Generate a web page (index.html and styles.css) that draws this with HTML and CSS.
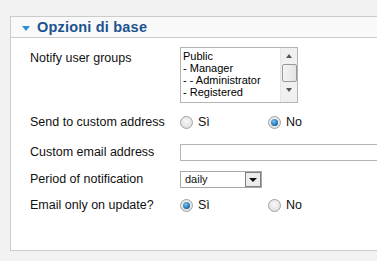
FILE: index.html
```html
<!DOCTYPE html>
<html lang="it">
<head>
  <meta charset="UTF-8">
  <title>Opzioni di base</title>
  <link rel="stylesheet" href="styles.css">
</head>
<body>
  <div class="frame">
    <div class="panel">
      <div class="panel-head">
        <span class="toggle"></span>
        <h3>Opzioni di base</h3>
      </div>

      <div class="panel-body">
        <div class="row row-groups">
          <label class="lbl">Notify user groups</label>
          <div class="listbox">
            <ul class="options">
              <li>Public</li>
              <li>- Manager</li>
              <li>- - Administrator</li>
              <li>- Registered</li>
            </ul>
            <div class="scrollbar">
              <span class="arrow up"></span>
              <span class="thumb"></span>
              <span class="arrow down"></span>
            </div>
          </div>
        </div>

        <div class="row row-custom">
          <label class="lbl">Send to custom address</label>
          <div class="radios">
            <span class="opt"><span class="radio"></span>Sì</span>
            <span class="opt"><span class="radio checked"></span>No</span>
          </div>
        </div>

        <div class="row row-email">
          <label class="lbl">Custom email address</label>
          <div class="textbox"></div>
        </div>

        <div class="row row-period">
          <label class="lbl">Period of notification</label>
          <div class="dropdown">
            <span class="value">daily</span>
            <span class="drop-btn"></span>
          </div>
        </div>

        <div class="row row-update">
          <label class="lbl">Email only on update?</label>
          <div class="radios">
            <span class="opt"><span class="radio checked"></span>Sì</span>
            <span class="opt"><span class="radio"></span>No</span>
          </div>
        </div>
      </div>
    </div>
  </div>
</body>
</html>
```
FILE: styles.css
```css
* {
  margin: 0;
  padding: 0;
  box-sizing: border-box;
}

body {
  background: #f2f2f2;
  font-family: "Liberation Sans", Arial, sans-serif;
  color: #111;
}

.frame {
  width: 377px;
  height: 261px;
  overflow: hidden;
  padding: 16px 0 0 10px;
}

.panel {
  width: 420px;
  height: 235px;
  background: #fff;
  border: 1px solid #ccc;
}

.panel-head {
  height: 21px;
  background: #f9f9f9;
  border-bottom: 1px solid #ccc;
  display: flex;
  align-items: center;
  padding-left: 11px;
}

.toggle {
  width: 0;
  height: 0;
  border-left: 4px solid transparent;
  border-right: 4px solid transparent;
  border-top: 5px solid #2d8fd0;
  margin-right: 7px;
  margin-top: 2px;
}

.panel-head h3 {
  font-size: 14.5px;
  font-weight: bold;
  color: #1b5390;
  letter-spacing: 0.2px;
}

.panel-body {
  padding-left: 19px;
}

.row {
  display: flex;
  align-items: center;
  height: 26px;
}

.lbl {
  width: 150px;
  font-size: 12.5px;
  color: #111;
}

.row-groups {
  height: 56px;
  margin-top: 9px;
  align-items: flex-start;
}

.row-groups .lbl {
  padding-top: 4px;
}

.row-custom { margin-top: 6px; }
.row-email { margin-top: 4px; }
.row-period { margin-top: 1px; }

/* lista selezione multipla */
.listbox {
  width: 118px;
  height: 56px;
  border: 1px solid #b4b4b4;
  display: flex;
  background: #fff;
}

.options {
  list-style: none;
  flex: 1;
  padding: 2px 0 0 2px;
  font-size: 11px;
  line-height: 12px;
  color: #000;
}

.scrollbar {
  width: 17px;
  background: #f0f0f0;
  border-left: 1px solid #e6e6e6;
  display: flex;
  flex-direction: column;
  align-items: center;
}

.arrow {
  width: 0;
  height: 0;
  border-left: 3px solid transparent;
  border-right: 3px solid transparent;
}

.arrow.up {
  border-bottom: 4px solid #555;
  margin: 6px 0 6px;
}

.arrow.down {
  border-top: 4px solid #555;
  margin-top: 6px;
}

.thumb {
  width: 15px;
  height: 18px;
  border: 1px solid #999;
  border-radius: 2px;
  background: linear-gradient(to right, #f4f4f4, #e4e4e4);
}

/* radio */
.radios {
  display: flex;
  font-size: 12.5px;
}

.opt {
  display: flex;
  align-items: center;
  width: 88px;
}

.radio {
  width: 13px;
  height: 13px;
  border-radius: 50%;
  border: 1px solid #a2a2a2;
  background: radial-gradient(circle at 50% 40%, #fafafa, #d6d6d6);
  margin-right: 5px;
  position: relative;
}

.radio.checked::after {
  content: "";
  position: absolute;
  left: 2px;
  top: 2px;
  width: 7px;
  height: 7px;
  border-radius: 50%;
  background: radial-gradient(circle at 40% 35%, #7fc4f0, #1766a8 70%, #0d3f70);
}

.textbox {
  width: 220px;
  height: 17px;
  border: 1px solid #b4b4b4;
  background: #fff;
}

.dropdown {
  width: 82px;
  height: 17px;
  border: 1px solid #a9a9a9;
  display: flex;
  align-items: center;
  font-size: 11px;
}

.dropdown .value {
  flex: 1;
  padding-left: 4px;
}

.drop-btn {
  width: 16px;
  height: 15px;
  border: 1px solid #808080;
  background: #ececec;
  display: flex;
  align-items: center;
  justify-content: center;
}

.drop-btn::after {
  content: "";
  border-left: 4px solid transparent;
  border-right: 4px solid transparent;
  border-top: 4px solid #111;
  margin-top: 2px;
}
```
